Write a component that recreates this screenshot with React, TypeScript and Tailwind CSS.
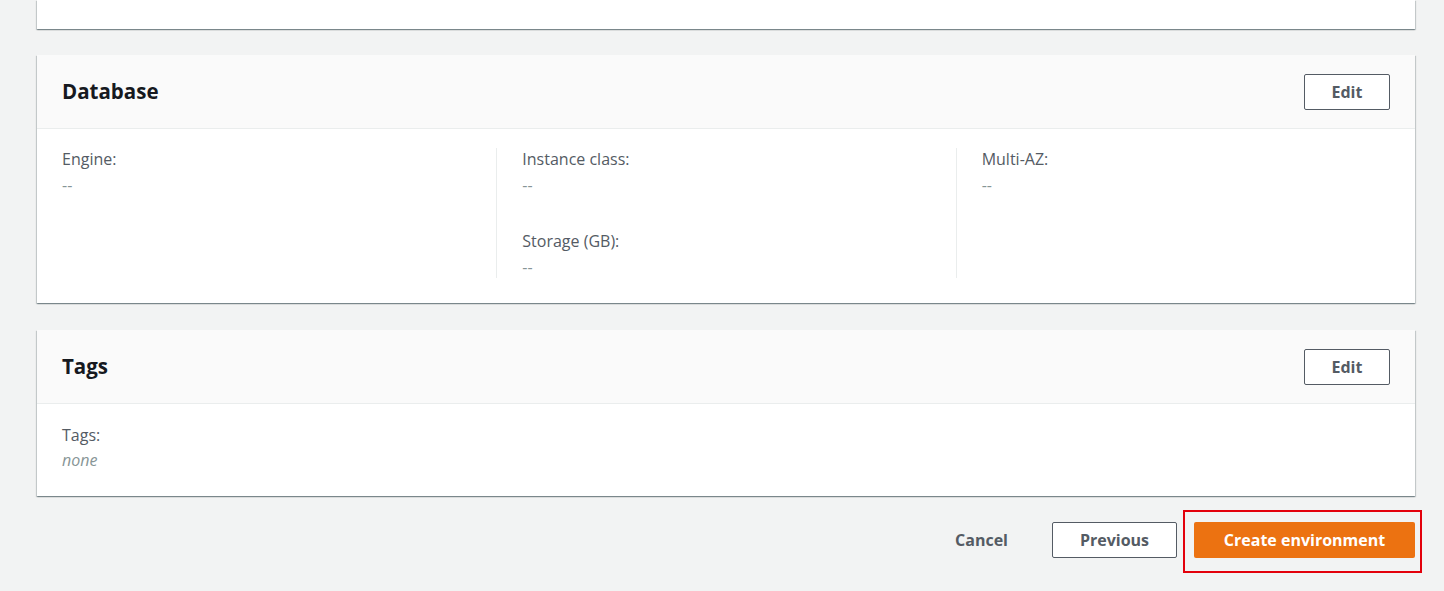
import React from 'react';

const font = { fontFamily: '"Open Sans", "Noto Sans", Arial, sans-serif' };

const cardShadow =
    'shadow-[0_1px_1px_0_rgba(0,28,36,0.3),1px_1px_1px_0_rgba(0,28,36,0.15),-1px_1px_1px_0_rgba(0,28,36,0.15)]';

function EditButton() {
    return (
        <button className="h-9 w-[86px] rounded-[2px] border border-[#545b64] bg-white text-base font-bold text-[#545b64]">
            Edit
        </button>
    );
}

function CardHeader({ title }: { title: string }) {
    return (
        <div className="flex h-[74px] items-center justify-between border-b border-[#eaeded] bg-[#fafafa] px-[25px]">
            <h2 className="text-[20.5px] font-bold text-[#16191f]">{title}</h2>
            <EditButton />
        </div>
    );
}

function Field({ label, value, italic }: { label: string; value: string; italic?: boolean }) {
    return (
        <div className="flex flex-col gap-1">
            <span className="text-base leading-[22px] text-[#545b64]">{label}</span>
            <span className={`text-base leading-[22px] text-[#879596] ${italic ? 'italic' : ''}`}>{value}</span>
        </div>
    );
}

export default function App() {
    return (
        <div className="min-h-[591px] bg-[#f2f3f3] pl-[37px] pr-[29px]" style={font}>
            {/* tail of the previous card */}
            <div className={`h-[29px] bg-white ${cardShadow}`} />

            {/* Database */}
            <div className={`mt-[26px] bg-white ${cardShadow}`}>
                <CardHeader title="Database" />
                <div className="grid grid-cols-3 pt-[19px] pb-[25px]">
                    <div className="pl-[25px]">
                        <Field label="Engine:" value="--" />
                    </div>
                    <div className="flex flex-col gap-[34px] border-l border-[#eaeded] pl-[25px]">
                        <Field label="Instance class:" value="--" />
                        <Field label="Storage (GB):" value="--" />
                    </div>
                    <div className="border-l border-[#eaeded] pl-[25px]">
                        <Field label="Multi-AZ:" value="--" />
                    </div>
                </div>
            </div>

            {/* Tags */}
            <div className={`mt-[27px] bg-white ${cardShadow}`}>
                <CardHeader title="Tags" />
                <div className="px-[25px] pt-5 pb-[25px]">
                    <div className="flex flex-col gap-[3px]">
                        <span className="text-base leading-[22px] text-[#545b64]">Tags:</span>
                        <span className="text-base italic leading-[22px] text-[#879596]">none</span>
                    </div>
                </div>
            </div>

            {/* Footer actions */}
            <div className="mt-[26px] flex items-center justify-end">
                <button className="h-9 px-5 text-base font-bold text-[#545b64]">Cancel</button>
                <button className="ml-6 h-9 w-[125px] rounded-[2px] border border-[#545b64] bg-white text-base font-bold text-[#545b64]">
                    Previous
                </button>
                <div className="relative ml-[17px]">
                    <span className="pointer-events-none absolute -top-[12px] -right-[7px] -bottom-[15px] -left-[11px] border-2 border-[#e3000b]" />
                    <button className="h-9 w-[221px] rounded-[2px] bg-[#ec7211] text-base font-bold text-white">
                        Create environment
                    </button>
                </div>
            </div>
        </div>
    );
}
